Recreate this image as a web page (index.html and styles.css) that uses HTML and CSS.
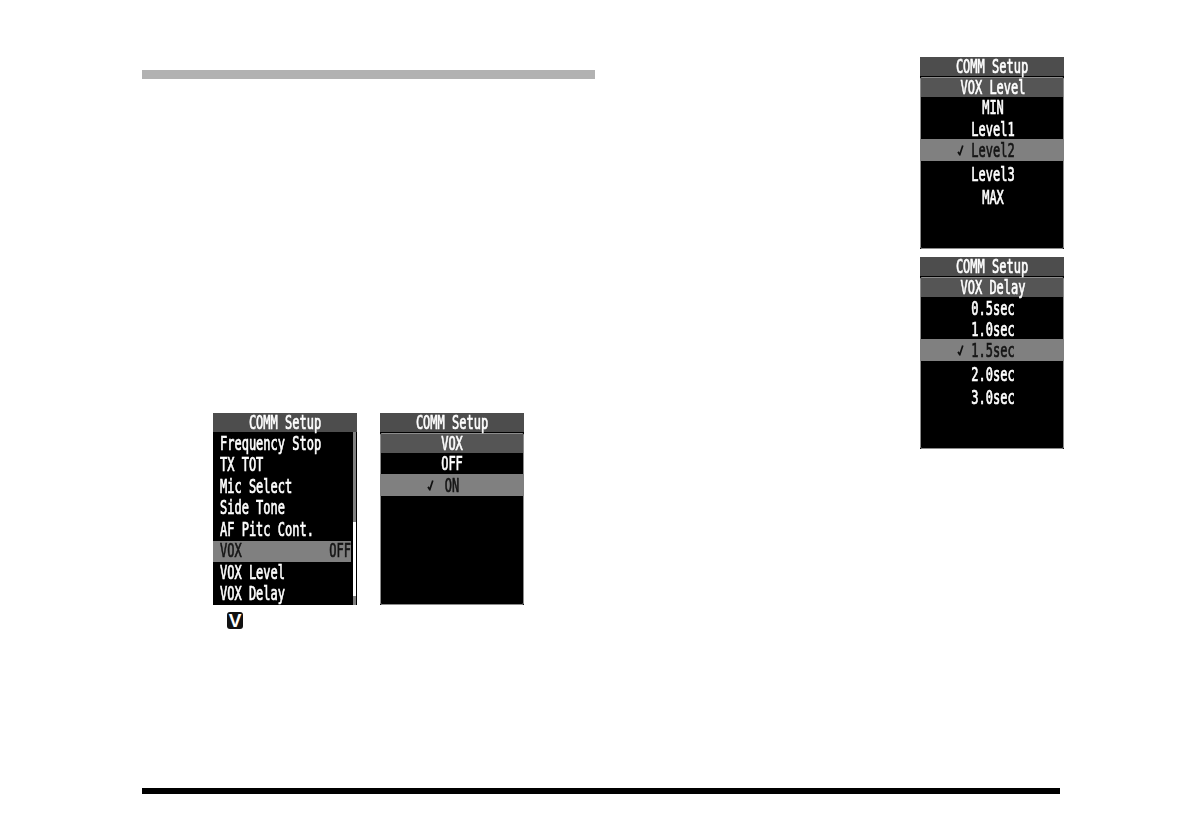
FILE: index.html
```html
<!DOCTYPE html>
<html lang="en">
<head>
<meta charset="utf-8">
<title>COMM Setup</title>
<link rel="stylesheet" href="styles.css">
</head>
<body>
<main class="page">
  <div class="columns">
    <section class="left">
      <div class="graybar"></div>
      <div class="shots">
        <div class="shot-col">
          <div class="screen">
            <div class="head"><span class="t">COMM Setup</span></div>
            <div class="list">
              <ul class="items">
                <li class="item"><span class="t">Frequency Stop</span></li>
                <li class="item"><span class="t">TX TOT</span></li>
                <li class="item"><span class="t">Mic Select</span></li>
                <li class="item"><span class="t">Side Tone</span></li>
                <li class="item"><span class="t">AF Pitc Cont.</span></li>
                <li class="item sel"><span class="t">VOX</span><span class="t">OFF</span></li>
                <li class="item"><span class="t">VOX Level</span></li>
                <li class="item"><span class="t">VOX Delay</span></li>
              </ul>
              <div class="scroll"><div class="thumb"></div></div>
            </div>
          </div>
          <span class="key">V</span>
        </div>
        <div class="screen">
          <div class="head"><span class="t">COMM Setup</span></div>
          <div class="panel">
            <div class="title"><span class="t">VOX</span></div>
            <div class="row"><span class="t">OFF</span></div>
            <div class="row hl"><span class="t mark wide"><svg class="check" viewBox="0 0 7 10" preserveAspectRatio="none"><path d="M1 6.5l1.8 2.6L5.8 .6"/></svg>ON</span></div>
          </div>
        </div>
      </div>
    </section>
    <aside class="right">
      <div class="screen">
        <div class="head"><span class="t">COMM Setup</span></div>
        <div class="panel">
          <div class="title"><span class="t">VOX Level</span></div>
          <div class="row"><span class="t">MIN</span></div>
          <div class="row low"><span class="t">Level1</span></div>
          <div class="row hl"><span class="t mark"><svg class="check" viewBox="0 0 7 10" preserveAspectRatio="none"><path d="M1 6.5l1.8 2.6L5.8 .6"/></svg>Level2</span></div>
          <div class="row gap3"><span class="t">Level3</span></div>
          <div class="row gap2"><span class="t">MAX</span></div>
        </div>
      </div>
      <div class="screen">
        <div class="head"><span class="t">COMM Setup</span></div>
        <div class="panel">
          <div class="title"><span class="t">VOX Delay</span></div>
          <div class="row low"><span class="t">0.5sec</span></div>
          <div class="row low"><span class="t">1.0sec</span></div>
          <div class="row hl"><span class="t mark"><svg class="check" viewBox="0 0 7 10" preserveAspectRatio="none"><path d="M1 6.5l1.8 2.6L5.8 .6"/></svg>1.5sec</span></div>
          <div class="row gap3"><span class="t">2.0sec</span></div>
          <div class="row gap2"><span class="t">3.0sec</span></div>
        </div>
      </div>
    </aside>
  </div>
  <div class="rule"></div>
</main>
</body>
</html>
```
FILE: styles.css
```css
* { box-sizing: border-box; }
html, body { margin: 0; padding: 0; background: #fff; }
.page {
  width: 1191px;
  height: 839px;
  padding: 57px 127px 0 142px;
  overflow: hidden;
  font-family: "DejaVu Sans Mono", "Liberation Mono", monospace;
  font-size: 12px;
  font-weight: 400;
  color: #fff;
}
.columns { display: flex; justify-content: space-between; height: 731px; }
.left { width: 453px; padding-top: 13px; }
.graybar { height: 9px; background: #b2b2b2; }
.shots { display: flex; gap: 23px; margin: 334px 0 0 71px; }
.shot-col { display: flex; flex-direction: column; align-items: flex-start; }
.right { display: flex; flex-direction: column; gap: 8px; }
.screen { width: 144px; height: 192px; background: #000; display: flex; flex-direction: column; }
.t {
  display: inline-block;
  transform: scaleY(1.55);
  white-space: pre;
  -webkit-text-stroke: .45px currentColor;
  filter: blur(.3px);
}
.head {
  height: 19px;
  flex: none;
  background: #4d4d4d;
  display: flex;
  align-items: center;
  justify-content: center;
}
.list { flex: 1; display: flex; min-height: 0; }
.items { width: 138px; flex: none; margin: 1px 0 0; padding: 0; list-style: none; }
.item {
  height: 21.5px;
  padding-left: 7px;
  display: flex;
  align-items: center;
  justify-content: space-between;
}
.sel { background: #808080; color: #141414; }
.scroll { width: 3px; background: #808080; margin-left: 2px; padding-top: 90px; }
.thumb { height: 74px; background: #fff; }
.panel {
  flex: 1;
  margin-top: 1px;
  border: 1px solid #8c8c8c;
  border-radius: 2px;
  display: flex;
  flex-direction: column;
}
.title {
  height: 19px;
  flex: none;
  background: #555;
  display: flex;
  align-items: center;
  justify-content: center;
}
.row { height: 21px; flex: none; display: flex; align-items: center; justify-content: center; }
.right .title, .right .row { padding-left: 2px; }
.low { padding-top: 2px; }
.hl { height: 22px; padding-top: 1px; background: #808080; color: #141414; margin: 0 -1px; }
.gap3 { margin-top: 3px; }
.gap2 { margin-top: 2px; }
.mark { position: relative; }
.check {
  position: absolute;
  right: 100%;
  top: 3px;
  width: 7px;
  height: 7px;
  margin-right: 7px;
  fill: none;
  stroke: #111;
  stroke-width: 1.7;
}
.wide .check { margin-right: 11px; }
.key {
  width: 16px;
  height: 17px;
  margin: 7px 0 0 14px;
  border-radius: 3px;
  background: #111;
  color: #fff;
  font: 700 19px/17px "Liberation Sans", sans-serif;
  text-align: center;
}
.rule { width: 918px; height: 6px; background: #000; }
```
